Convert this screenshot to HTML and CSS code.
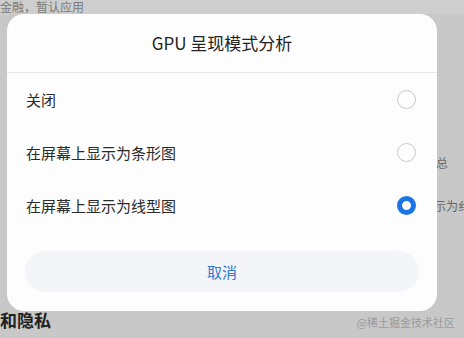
FILE: index.html
```html
<!DOCTYPE html>
<html lang="zh-CN">
<head>
  <meta charset="UTF-8">
  <meta name="viewport" content="width=device-width, initial-scale=1.0">
  <title>GPU 呈现模式分析</title>
  <link rel="stylesheet" href="styles.css">
</head>
<body>
  <!-- Dimmed settings page behind the dialog -->
  <div class="page">
    <div class="page-top">金融，暂认应用</div>
    <div class="page-side">
      <span class="side-a">总</span>
      <span class="side-b">示为纟</span>
    </div>
    <div class="page-bottom">
      <div class="section-title">和隐私</div>
      <div class="watermark">@稀土掘金技术社区</div>
    </div>
  </div>

  <!-- Dialog -->
  <div class="dialog">
    <div class="dialog-title">GPU 呈现模式分析</div>
    <div class="options">
      <div class="option">
        <span>关闭</span>
        <span class="radio"></span>
      </div>
      <div class="option">
        <span>在屏幕上显示为条形图</span>
        <span class="radio"></span>
      </div>
      <div class="option">
        <span>在屏幕上显示为线型图</span>
        <span class="radio checked"></span>
      </div>
    </div>
    <div class="cancel">取消</div>
  </div>
</body>
</html>
```

FILE: styles.css
```css
/* Page behind */
body {
  margin: 0;
  padding: 0;
  width: 464px;
  height: 338px;
  overflow: hidden;
  background: #c8c8c8;
  font-family: "Noto Sans CJK SC", "Noto Sans", sans-serif;
}

.page {
  height: 338px;
  display: flex;
  flex-direction: column;
  justify-content: space-between;
  position: relative;
}

.page-top {
  height: 14px;
  background: #cecece;
  font-size: 12px;
  line-height: 14px;
  color: #7a7a7a;
}

.page-side {
  display: flex;
  flex-direction: column;
  align-items: flex-end;
  gap: 26px;
  font-size: 12px;
  color: #666;
  margin-top: 44px;
}

.side-a {
  padding-right: 16px;
}

.side-b {
  margin-right: -6px;
}

.page-bottom {
  display: flex;
  justify-content: space-between;
  align-items: flex-end;
  padding: 0 9px 6px 0;
}

.section-title {
  font-size: 17px;
  font-weight: bold;
  color: #222;
  line-height: 20px;
  margin-bottom: 2px;
}

.watermark {
  font-size: 11px;
  color: #9a9a9a;
  line-height: 16px;
  margin-bottom: 2px;
}

/* Dialog */
.dialog {
  position: absolute;
  top: 14px;
  left: 7px;
  width: 430px;
  height: 297px;
  background: #fdfdfe;
  border-radius: 17px;
  box-sizing: border-box;
}

.dialog-title {
  height: 58px;
  line-height: 58px;
  text-align: center;
  font-size: 17px;
  color: #222;
  border-bottom: 1px solid #e4e6ea;
}

.options {
  padding: 0 21px 0 19px;
}

.option {
  height: 53px;
  display: flex;
  justify-content: space-between;
  align-items: center;
  font-size: 15px;
  color: #2a2a2a;
}

.radio {
  width: 19px;
  height: 19px;
  border: 1px solid #c9c9cc;
  border-radius: 50%;
  box-sizing: border-box;
}

.radio.checked {
  border: 5px solid #1b74e4;
}

.cancel {
  margin: 19px 18px 0;
  height: 41px;
  line-height: 41px;
  border-radius: 21px;
  background: #f3f5f8;
  text-align: center;
  font-size: 15px;
  color: #2f78d6;
}
```
